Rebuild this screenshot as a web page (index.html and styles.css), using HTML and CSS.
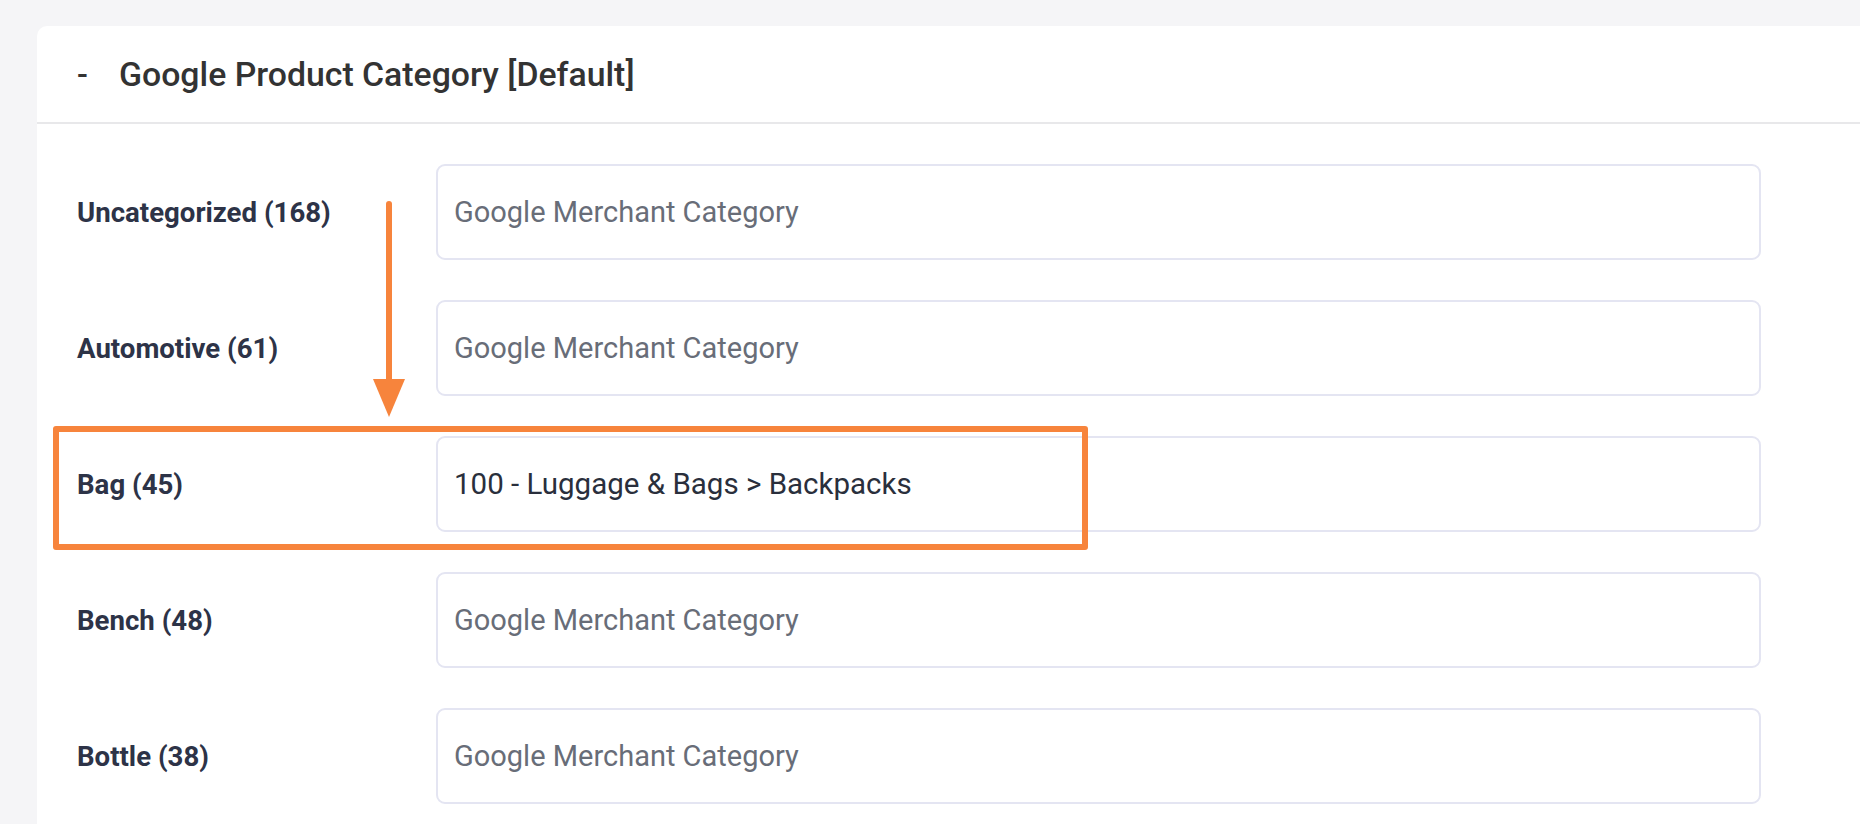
FILE: index.html
```html
<!DOCTYPE html>
<html lang="en">
<head>
<meta charset="utf-8">
<title>Google Product Category</title>
<link rel="stylesheet" href="styles.css">
</head>
<body>
<div class="page">
  <section class="card">
    <header class="card-head">
      <span class="toggle">-</span>
      <h2 class="title">Google Product Category [Default]</h2>
    </header>
    <div class="rows">
      <div class="row">
        <label class="label">Uncategorized (168)</label>
        <div class="field placeholder">Google Merchant Category</div>
      </div>
      <div class="row">
        <label class="label">Automotive (61)</label>
        <div class="field placeholder">Google Merchant Category</div>
      </div>
      <div class="row">
        <label class="label">Bag (45)</label>
        <div class="field filled">100 - Luggage &amp; Bags &gt; Backpacks</div>
      </div>
      <div class="row">
        <label class="label">Bench (48)</label>
        <div class="field placeholder">Google Merchant Category</div>
      </div>
      <div class="row">
        <label class="label">Bottle (38)</label>
        <div class="field placeholder">Google Merchant Category</div>
      </div>
    </div>
  </section>
  <div class="highlight"></div>
  <svg class="arrow" width="40" height="220" viewBox="0 0 40 220">
    <line x1="20" y1="3" x2="20" y2="180" stroke="#f7843c" stroke-width="6" stroke-linecap="round"/>
    <polygon points="4,178 36,178 20,216" fill="#f7843c"/>
  </svg>
</div>
</body>
</html>
```

FILE: styles.css
```css
html, body {
  margin: 0;
  padding: 0;
  background: #f5f5f7;
  font-family: Roboto, "Noto Sans", "Liberation Sans", sans-serif;
}

.page {
  position: relative;
  height: 824px;
  overflow: hidden;
  padding-top: 26px;
  padding-left: 37px;
  box-sizing: border-box;
}

.card {
  background: #ffffff;
  border-top-left-radius: 10px;
  height: 900px;
}

.card-head {
  display: flex;
  align-items: center;
  height: 96px;
  padding-left: 40px;
  border-bottom: 2px solid #e8e8ea;
}

.toggle {
  font-size: 32px;
  font-weight: 500;
  color: #333333;
  width: 42px;
}

.title {
  margin: 0;
  font-size: 33.8px;
  font-weight: 500;
  color: #333333;
}

.rows {
  display: flex;
  flex-direction: column;
  gap: 40px;
  padding: 40px 0 0 40px;
}

.row {
  display: flex;
  align-items: center;
}

.label {
  width: 359px;
  flex: none;
  font-size: 27.6px;
  font-weight: 700;
  color: #2d3347;
}

.field {
  width: 1325px;
  height: 96px;
  box-sizing: border-box;
  border: 2px solid #e4e5f2;
  border-radius: 9px;
  display: flex;
  align-items: center;
  padding-left: 16px;
  font-size: 29px;
}

.placeholder {
  color: #686d78;
}

.filled {
  color: #2a2f3c;
  font-size: 29.5px;
}

.highlight {
  position: absolute;
  left: 53px;
  top: 426px;
  width: 1035px;
  height: 124px;
  box-sizing: border-box;
  border: 6px solid #f7843c;
  border-radius: 3px;
}

.arrow {
  position: absolute;
  left: 369px;
  top: 201px;
}
```
